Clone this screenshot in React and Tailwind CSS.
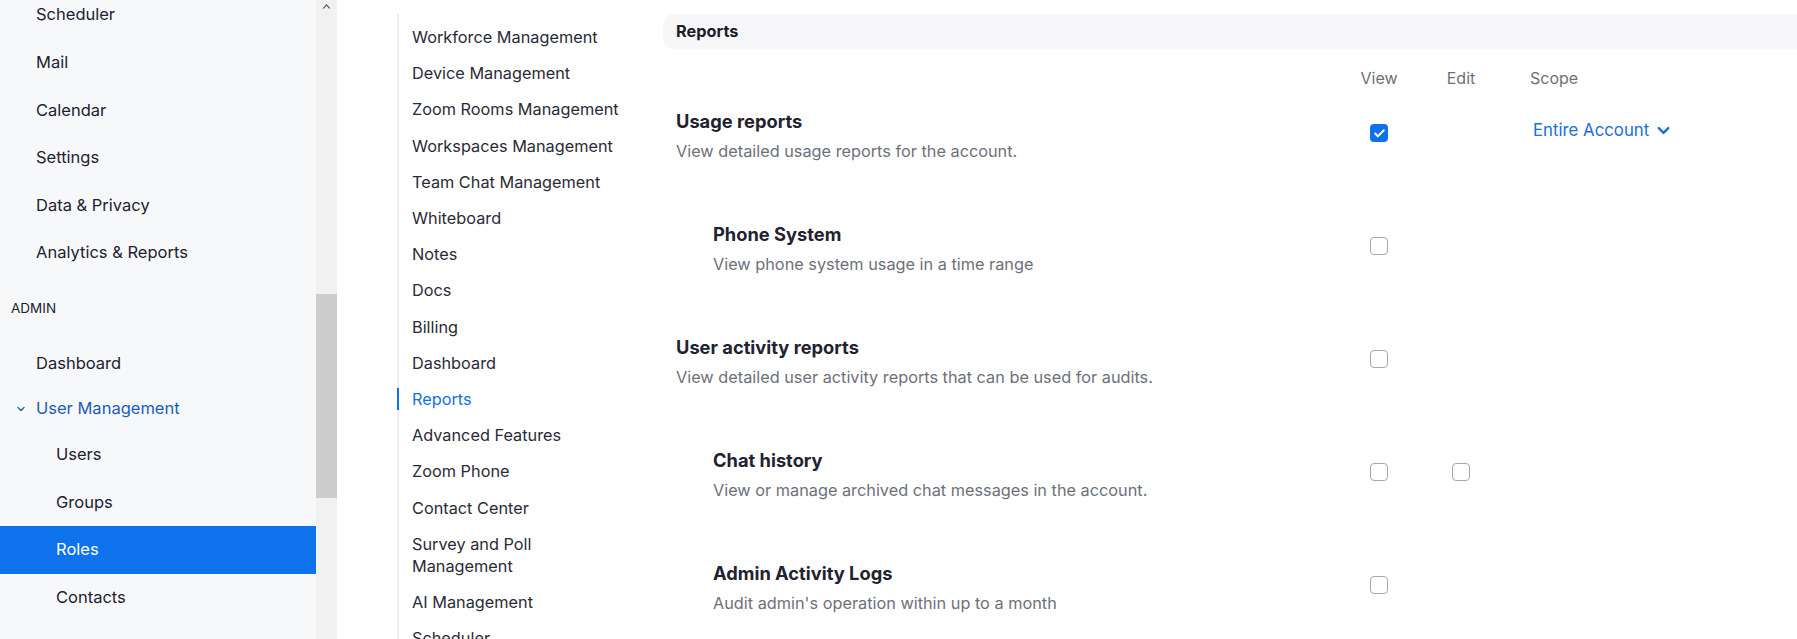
import { Check, ChevronDown } from 'lucide-react';

const font = { fontFamily: 'Inter, "Liberation Sans", Arial, sans-serif' };

const topItems = ['Scheduler', 'Mail', 'Calendar', 'Settings', 'Data & Privacy', 'Analytics & Reports'];

const navItems = [
  'Workforce Management',
  'Device Management',
  'Zoom Rooms Management',
  'Workspaces Management',
  'Team Chat Management',
  'Whiteboard',
  'Notes',
  'Docs',
  'Billing',
  'Dashboard',
  'Reports',
  'Advanced Features',
  'Zoom Phone',
  'Contact Center',
  'Survey and Poll Management',
  'AI Management',
  'Scheduler',
];

const rows = [
  { title: 'Usage reports', desc: 'View detailed usage reports for the account.', sub: false, view: true, edit: false, scope: true },
  { title: 'Phone System', desc: 'View phone system usage in a time range', sub: true, view: false },
  { title: 'User activity reports', desc: 'View detailed user activity reports that can be used for audits.', sub: false, view: false },
  { title: 'Chat history', desc: 'View or manage archived chat messages in the account.', sub: true, view: false, edit: false, hasEdit: true },
  { title: 'Admin Activity Logs', desc: "Audit admin's operation within up to a month", sub: true, view: false },
];

function Box({ checked }) {
  if (checked) {
    return (
      <span className="flex h-[18px] w-[18px] items-center justify-center rounded-[4px] bg-[#0e72ed]">
        <Check size={13} strokeWidth={3.5} color="#fff" />
      </span>
    );
  }
  return <span className="block h-[18px] w-[18px] rounded-[4px] border border-[#a7a7ae] bg-white" />;
}

function Sidebar() {
  return (
    <div className="flex h-full shrink-0">
      <div className="h-full w-[316px] overflow-hidden bg-[#f7f8fa] text-[#222230]">
        <div className="-mt-[9px]">
          {topItems.map((t) => (
            <div key={t} className="flex h-[47.6px] items-center pl-[36px] text-[16.5px]">
              {t}
            </div>
          ))}
        </div>
        <div className="flex h-[64px] items-center pl-[11px] text-[13.5px] text-[#222230]">ADMIN</div>
        <div className="flex h-[46px] items-center pl-[36px] text-[16.5px]">Dashboard</div>
        <div className="flex h-[44px] items-center text-[16.5px] text-[#1a5cc0]">
          <ChevronDown size={12} strokeWidth={2.5} className="ml-[15px] mr-[9px]" />
          User Management
        </div>
        {['Users', 'Groups', 'Roles', 'Contacts'].map((t) => (
          <div
            key={t}
            className={
              t === 'Roles'
                ? 'flex h-[47.7px] items-center bg-[#0e72ed] pl-[56px] text-[16.5px] text-white'
                : 'flex h-[47.7px] items-center pl-[56px] text-[16.5px]'
            }
          >
            {t}
          </div>
        ))}
      </div>
      <div className="flex h-full w-[21px] flex-col bg-[#f1f1f1]">
        <div className="flex h-[12px] items-center justify-center">
          <svg width="9" height="6" viewBox="0 0 9 6">
            <path d="M0.5 5.5 L4.5 1 L8.5 5.5 L7 5.5 L4.5 2.8 L2 5.5 Z" fill="#555" />
          </svg>
        </div>
        <div className="mt-[282px] h-[204px] bg-[#cdcdcd]" />
      </div>
    </div>
  );
}

function SubNav() {
  return (
    <div className="ml-[60px] mt-[14px] h-full w-[266px] shrink-0 border-l-2 border-[#eeeef1] pl-[13px] pr-[34px] pt-[5px] text-[16.3px] text-[#2b2b36]">
      {navItems.map((t) => (
        <div key={t} className="relative py-[7.1px] leading-[22px]">
          {t === 'Reports' && <span className="absolute -left-[15px] top-[7px] h-[22px] w-[2px] bg-[#0e72ed]" />}
          <span className={t === 'Reports' ? 'text-[#0e72ed]' : ''}>{t}</span>
        </div>
      ))}
    </div>
  );
}

function Main() {
  return (
    <div className="min-w-0 flex-1 pt-[14px]">
      <div className="flex h-[35px] items-center rounded-l-[10px] bg-[#f7f7f9] pl-[13px] text-[16.3px] font-bold text-[#1d1d26]">
        Reports
      </div>
      <div className="mt-[17px] flex h-[24px] items-center pl-[13px] text-[16px] text-[#6e7079]">
        <div className="w-[668px]" />
        <div className="w-[70px] text-center">View</div>
        <div className="w-[94px] text-center">Edit</div>
        <div className="pl-[22px]">Scope</div>
      </div>
      <div className="mt-[19px] flex flex-col gap-[59px] pl-[13px]">
        {rows.map((r) => (
          <div key={r.title} className="flex">
            <div className={r.sub ? 'w-[668px] pl-[37px]' : 'w-[668px]'}>
              <div className="text-[18.3px] font-bold leading-[24px] text-[#222230]">{r.title}</div>
              <div className="mt-[6px] text-[16.3px] leading-[24px] text-[#6e7079]">{r.desc}</div>
            </div>
            <div className="flex w-[70px] justify-center pt-[15px]">
              <Box checked={r.view} />
            </div>
            <div className="flex w-[94px] justify-center pt-[15px]">{r.hasEdit && <Box checked={false} />}</div>
            {r.scope && (
              <div className="flex items-center gap-[5px] self-start pl-[25px] pt-[9px] text-[16.8px] leading-[24px] text-[#1a6fd8]">
                Entire Account
                <ChevronDown size={19} strokeWidth={3} />
              </div>
            )}
          </div>
        ))}
      </div>
    </div>
  );
}

export default function App() {
  return (
    <div className="flex h-[639px] w-[1797px] overflow-hidden bg-white" style={font}>
      <Sidebar />
      <SubNav />
      <Main />
    </div>
  );
}
